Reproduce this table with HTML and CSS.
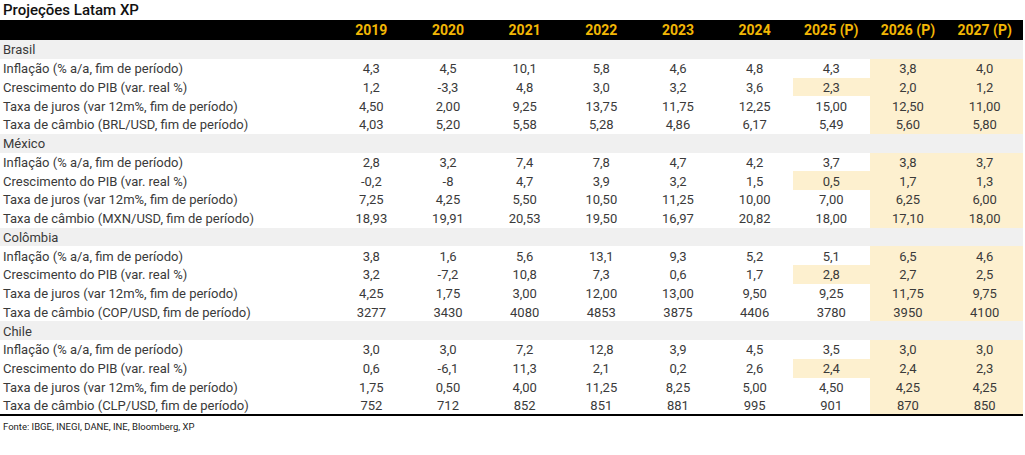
FILE: index.html
```html
<!DOCTYPE html>
<html lang="pt-BR">
<head>
<meta charset="utf-8">
<title>Projeções Latam XP</title>
<link rel="stylesheet" href="styles.css">
</head>
<body>
<div class="title">Projeções Latam XP</div>
<table class="proj">
  <colgroup>
    <col class="c-label">
    <col span="9" class="c-year">
  </colgroup>
  <thead>
    <tr><th></th><th>2019</th><th>2020</th><th>2021</th><th>2022</th><th>2023</th><th>2024</th><th>2025 (P)</th><th>2026 (P)</th><th>2027 (P)</th></tr>
  </thead>
  <tbody>
    <tr class="sec"><td>Brasil</td><td></td><td></td><td></td><td></td><td></td><td></td><td></td><td></td><td></td></tr>
    <tr><td>Inflação (% a/a, fim de período)</td><td>4,3</td><td>4,5</td><td>10,1</td><td>5,8</td><td>4,6</td><td>4,8</td><td>4,3</td><td class="hl">3,8</td><td class="hl">4,0</td></tr>
    <tr><td>Crescimento do PIB (var. real %)</td><td>1,2</td><td>-3,3</td><td>4,8</td><td>3,0</td><td>3,2</td><td>3,6</td><td class="hl">2,3</td><td class="hl">2,0</td><td class="hl">1,2</td></tr>
    <tr><td>Taxa de juros (var 12m%, fim de período)</td><td>4,50</td><td>2,00</td><td>9,25</td><td>13,75</td><td>11,75</td><td>12,25</td><td>15,00</td><td class="hl">12,50</td><td class="hl">11,00</td></tr>
    <tr><td>Taxa de câmbio (BRL/USD, fim de período)</td><td>4,03</td><td>5,20</td><td>5,58</td><td>5,28</td><td>4,86</td><td>6,17</td><td>5,49</td><td class="hl">5,60</td><td class="hl">5,80</td></tr>
    <tr class="sec"><td>México</td><td></td><td></td><td></td><td></td><td></td><td></td><td></td><td></td><td></td></tr>
    <tr><td>Inflação (% a/a, fim de período)</td><td>2,8</td><td>3,2</td><td>7,4</td><td>7,8</td><td>4,7</td><td>4,2</td><td>3,7</td><td class="hl">3,8</td><td class="hl">3,7</td></tr>
    <tr><td>Crescimento do PIB (var. real %)</td><td>-0,2</td><td>-8</td><td>4,7</td><td>3,9</td><td>3,2</td><td>1,5</td><td class="hl">0,5</td><td class="hl">1,7</td><td class="hl">1,3</td></tr>
    <tr><td>Taxa de juros (var 12m%, fim de período)</td><td>7,25</td><td>4,25</td><td>5,50</td><td>10,50</td><td>11,25</td><td>10,00</td><td>7,00</td><td class="hl">6,25</td><td class="hl">6,00</td></tr>
    <tr><td>Taxa de câmbio (MXN/USD, fim de período)</td><td>18,93</td><td>19,91</td><td>20,53</td><td>19,50</td><td>16,97</td><td>20,82</td><td>18,00</td><td class="hl">17,10</td><td class="hl">18,00</td></tr>
    <tr class="sec"><td>Colômbia</td><td></td><td></td><td></td><td></td><td></td><td></td><td></td><td></td><td></td></tr>
    <tr><td>Inflação (% a/a, fim de período)</td><td>3,8</td><td>1,6</td><td>5,6</td><td>13,1</td><td>9,3</td><td>5,2</td><td>5,1</td><td class="hl">6,5</td><td class="hl">4,6</td></tr>
    <tr><td>Crescimento do PIB (var. real %)</td><td>3,2</td><td>-7,2</td><td>10,8</td><td>7,3</td><td>0,6</td><td>1,7</td><td class="hl">2,8</td><td class="hl">2,7</td><td class="hl">2,5</td></tr>
    <tr><td>Taxa de juros (var 12m%, fim de período)</td><td>4,25</td><td>1,75</td><td>3,00</td><td>12,00</td><td>13,00</td><td>9,50</td><td>9,25</td><td class="hl">11,75</td><td class="hl">9,75</td></tr>
    <tr><td>Taxa de câmbio (COP/USD, fim de período)</td><td>3277</td><td>3430</td><td>4080</td><td>4853</td><td>3875</td><td>4406</td><td>3780</td><td class="hl">3950</td><td class="hl">4100</td></tr>
    <tr class="sec"><td>Chile</td><td></td><td></td><td></td><td></td><td></td><td></td><td></td><td></td><td></td></tr>
    <tr><td>Inflação (% a/a, fim de período)</td><td>3,0</td><td>3,0</td><td>7,2</td><td>12,8</td><td>3,9</td><td>4,5</td><td>3,5</td><td class="hl">3,0</td><td class="hl">3,0</td></tr>
    <tr><td>Crescimento do PIB (var. real %)</td><td>0,6</td><td>-6,1</td><td>11,3</td><td>2,1</td><td>0,2</td><td>2,6</td><td class="hl">2,4</td><td class="hl">2,4</td><td class="hl">2,3</td></tr>
    <tr><td>Taxa de juros (var 12m%, fim de período)</td><td>1,75</td><td>0,50</td><td>4,00</td><td>11,25</td><td>8,25</td><td>5,00</td><td>4,50</td><td class="hl">4,25</td><td class="hl">4,25</td></tr>
    <tr class="last"><td>Taxa de câmbio (CLP/USD, fim de período)</td><td>752</td><td>712</td><td>852</td><td>851</td><td>881</td><td>995</td><td>901</td><td class="hl">870</td><td class="hl">850</td></tr>
  </tbody>
</table>
<div class="source">Fonte: IBGE, INEGI, DANE, INE, Bloomberg, XP</div>
</body>
</html>
```

FILE: styles.css
```css
html, body {
  margin: 0;
  padding: 0;
  background: #ffffff;
}

body {
  font-family: Roboto, "Liberation Sans", Arial, sans-serif;
  color: #3a3a3a;
}

.title {
  height: 20px;
  line-height: 20px;
  padding-left: 3px;
  font-size: 15px;
  font-weight: 500;
  color: #111111;
}

.proj {
  width: 1023px;
  border-collapse: collapse;
  table-layout: fixed;
  font-size: 13px;
}

.c-label {
  width: 333px;
}

.c-year {
  width: 76.67px;
}

.proj thead tr {
  height: 20px;
}

.proj th {
  height: 20px;
  padding: 0;
  background: #000000;
  color: #f2b705;
  font-size: 14px;
  font-weight: 700;
  text-align: center;
}

.proj tbody tr {
  height: 18.75px;
}

.proj td {
  box-sizing: border-box;
  height: 18.75px;
  padding: 1px 0 0 0;
  text-align: center;
  line-height: 17px;
  white-space: nowrap;
  color: #3a3a3a;
}

.proj td:first-child {
  text-align: left;
  padding-left: 3px;
}

.proj tr.sec td {
  background: #f0f0f0;
}

.proj td.hl {
  background: #fdf0cf;
}

.proj tr.last td {
  border-bottom: 2px solid #000000;
}

.source {
  padding-left: 3px;
  margin-top: 5px;
  font-size: 9.5px;
  color: #222222;
}
```
